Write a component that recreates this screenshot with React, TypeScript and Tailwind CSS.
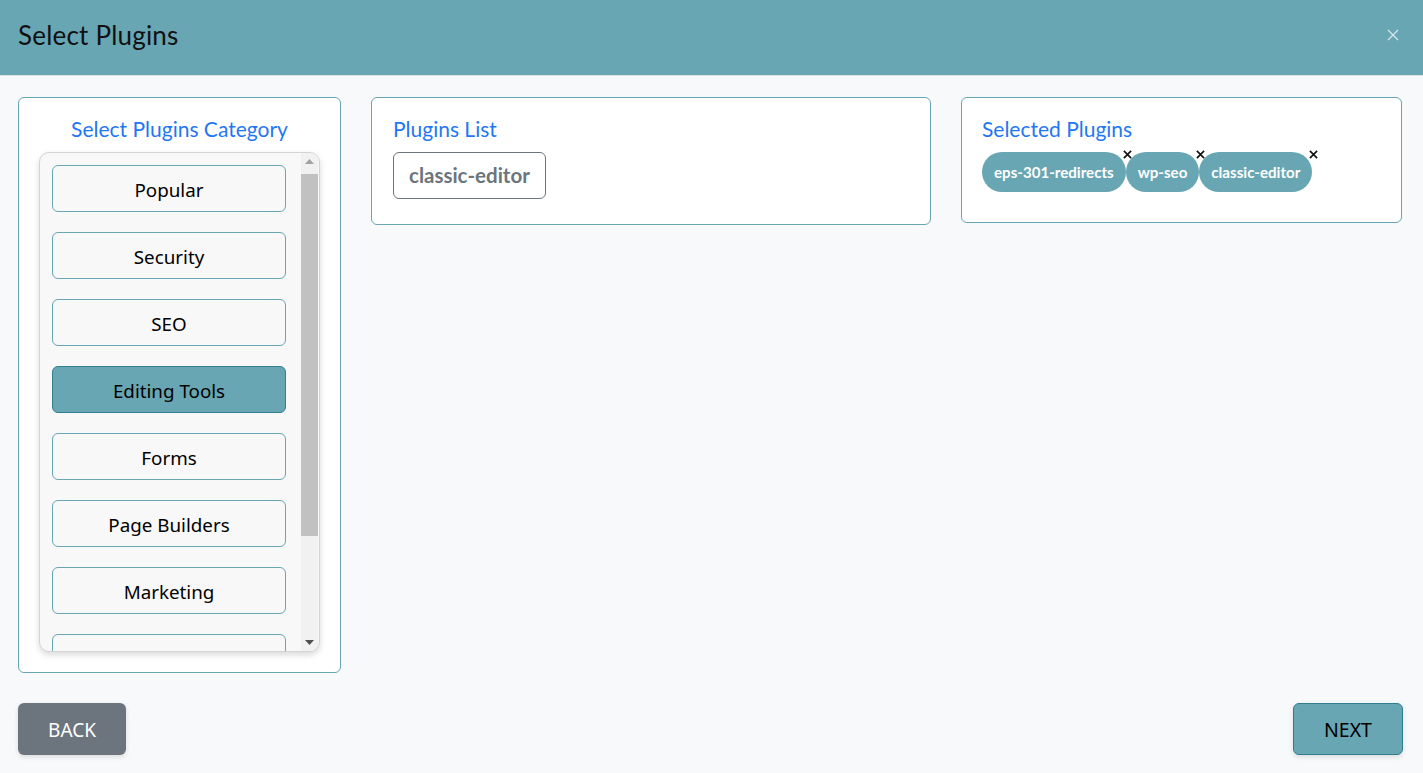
import React from "react";

const categories = [
  "Popular",
  "Security",
  "SEO",
  "Editing Tools",
  "Forms",
  "Page Builders",
  "Marketing",
  "Ecommerce",
];

const selected = ["eps-301-redirects", "wp-seo", "classic-editor"];

const titleFont = { fontFamily: "Lato, 'Noto Sans', sans-serif" };

export default function App() {
  return (
    <div className="w-[1423px] h-[773px] bg-[#f8f9fa] flex flex-col overflow-hidden" style={{ fontFamily: "'Noto Sans', sans-serif" }}>
      {/* Header */}
      <div className="h-[76px] shrink-0 bg-[#68a6b4] border-b border-[#dee2e6] flex items-center justify-between pl-[18px] pr-[24px] pb-[5px]">
        <h1 className="text-[26px] tracking-[0.2px] text-[#111] leading-none" style={titleFont}>
          Select Plugins
        </h1>
        <button className="text-[#d6e6ea] leading-none" aria-label="close">
          <svg width="12" height="12" viewBox="0 0 12 12" stroke="currentColor" strokeWidth="1.3">
            <path d="M1 1 L11 11 M11 1 L1 11" />
          </svg>
        </button>
      </div>

      {/* Body */}
      <div className="flex items-start gap-[30px] pl-[18px] pr-[21px] pt-[21px]">
        {/* Left card */}
        <div className="w-[323px] h-[576px] bg-white border border-[#68a6b4] rounded-[6px] px-5 pt-[19px] flex flex-col items-center">
          <div className="text-[21px] leading-[23px] text-[#1f77f4] mb-3" style={titleFont}>
            Select Plugins Category
          </div>
          <div className="w-[281px] h-[500px] bg-[#f8f8f8] border border-[#d4d4d4] rounded-[10px] shadow-[0_3px_6px_rgba(0,0,0,0.15)] overflow-hidden flex">
            <div className="flex-1 overflow-hidden pl-3 pt-3 flex flex-col gap-5">
              {categories.map((c) => (
                <button
                  key={c}
                  className={
                    c === "Editing Tools"
                      ? "w-[234px] h-[47px] shrink-0 pt-[3px] rounded-[6px] border border-[#2f7f90] bg-[#68a6b4] text-[18.8px] text-black"
                      : "w-[234px] h-[47px] shrink-0 pt-[3px] rounded-[6px] border border-[#68a6b4] bg-[#f8f8f8] text-[18.8px] text-black"
                  }
                >
                  {c}
                </button>
              ))}
            </div>
            {/* scrollbar */}
            <div className="w-[17px] shrink-0 bg-[#f1f1f1] flex flex-col mr-[1px]">
              <div className="h-[17px] flex items-center justify-center">
                <svg width="9" height="5" viewBox="0 0 9 5">
                  <path d="M0 5 L4.5 0 L9 5 Z" fill="#a3a3a3" />
                </svg>
              </div>
              <div className="flex-1 pt-[4px]">
                <div className="h-[362px] bg-[#c1c1c1]" />
              </div>
              <div className="h-[17px] flex items-center justify-center">
                <svg width="9" height="5" viewBox="0 0 9 5">
                  <path d="M0 0 L4.5 5 L9 0 Z" fill="#505050" />
                </svg>
              </div>
            </div>
          </div>
        </div>

        {/* Middle card */}
        <div className="w-[560px] bg-white border border-[#68a6b4] rounded-[6px] pl-[21px] pr-5 pt-[19px] pb-[25px]">
          <div className="text-[21px] leading-[23px] text-[#1f77f4] mb-3" style={titleFont}>
            Plugins List
          </div>
          <button
            className="h-[47px] px-[15px] rounded-[6px] border border-[#6c757d] bg-white text-[20.5px] font-bold text-[#6c757d]"
            style={titleFont}
          >
            classic-editor
          </button>
        </div>

        {/* Right card */}
        <div className="flex-1 bg-white border border-[#68a6b4] rounded-[6px] pl-[20px] pr-5 pt-[19px] pb-[30px]">
          <div className="text-[21px] leading-[23px] text-[#1f77f4] mb-3" style={titleFont}>
            Selected Plugins
          </div>
          <div className="flex items-center">
            {selected.map((s) => (
              <div key={s} className="relative">
                <span
                  className="h-[40px] px-[12px] rounded-full bg-[#68a6b4] text-white text-[15.1px] font-bold flex items-center"
                  style={titleFont}
                >
                  {s}
                </span>
                <span className="absolute -right-[6px] -top-[2px] text-[#111]">
                  <svg width="9" height="9" viewBox="0 0 10 10" stroke="currentColor" strokeWidth="1.8">
                    <path d="M1 1 L9 9 M9 1 L1 9" />
                  </svg>
                </span>
              </div>
            ))}
          </div>
        </div>
      </div>

      {/* Footer buttons */}
      <div className="flex justify-between pl-[18px] pr-[20px] mt-[30px]">
        <button className="w-[108px] h-[52px] pt-[2px] rounded-[6px] bg-[#6c757d] text-white text-[19px] shadow-[0_2px_5px_rgba(0,0,0,0.12)]">
          BACK
        </button>
        <button className="w-[110px] h-[52px] pt-[2px] rounded-[6px] bg-[#68a6b4] border border-[#2f7f90] text-black text-[19.5px] shadow-[0_2px_5px_rgba(0,0,0,0.12)]">
          NEXT
        </button>
      </div>
    </div>
  );
}
